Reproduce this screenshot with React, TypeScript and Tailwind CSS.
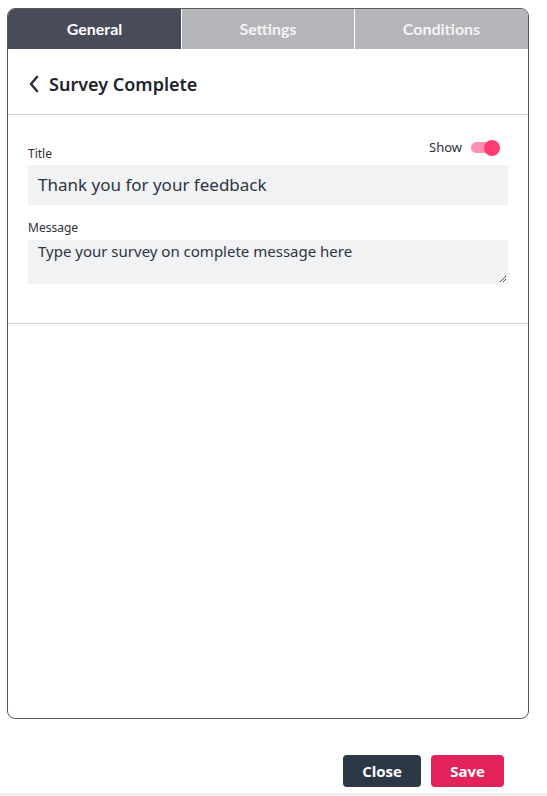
export default function App() {
  return (
    <div className="w-[547px] h-[796px] bg-white flex flex-col" style={{ fontFamily: "'Noto Sans', sans-serif" }}>
      {/* panel */}
      <div className="mt-2 ml-[7px] w-[522px] h-[711px] border border-[#5a5a5a] rounded-lg overflow-hidden flex flex-col">
        {/* tabs */}
        <div className="flex h-10 shrink-0" style={{ fontFamily: "Lato, sans-serif" }}>
          <div className="w-[173px] flex items-center justify-center bg-[#474b5a] text-white text-[16px] font-bold">General</div>
          <div className="w-[173px] flex items-center justify-center bg-[#b4b5b9] border-l border-white text-[#f4f4f5] text-[16px] font-bold">Settings</div>
          <div className="flex-1 flex items-center justify-center bg-[#b4b5b9] border-l border-white text-[#f4f4f5] text-[16px] font-bold">Conditions</div>
        </div>

        {/* header */}
        <div className="h-[66px] shrink-0 flex items-center pl-5 pt-[5px] border-b border-[#cfcfcf]">
          <svg width="12" height="18" viewBox="0 0 12 18" fill="none">
            <path d="M9 2L3 9l6 7" stroke="#2d3340" strokeWidth="2.6" strokeLinecap="round" strokeLinejoin="round" />
          </svg>
          <span className="ml-[9px] text-[18px] font-semibold text-[#1f232b]">Survey Complete</span>
        </div>

        {/* form */}
        <div className="px-5 pt-[25px] pb-[39px] border-b border-[#cfcfcf]">
          <div className="flex items-end justify-between">
            <span className="text-[12px] text-[#2c2f36]">Title</span>
            <div className="flex items-center gap-[9px] mr-[8px] mb-[3px] -translate-y-[2px]">
              <span className="text-[13px] text-[#2c2f36]">Show</span>
              <div className="relative w-[29px] h-4 flex items-center">
                <div className="w-[26px] h-[11px] rounded-full bg-[#ff8fb0]" />
                <div className="absolute right-0 top-0 w-4 h-4 rounded-full bg-[#ff3d73]" />
              </div>
            </div>
          </div>
          <div className="mt-[2px] h-10 bg-[#f0f2f4] flex items-center px-[10px] text-[17px] text-[#2d3542]">
            Thank you for your feedback
          </div>
          <div className="mt-[14px] text-[12px] text-[#2c2f36]">Message</div>
          <div className="relative mt-[3px] h-[44px] bg-[#f0f2f4] px-[10px] text-[15px] text-[#2d3542]">
            Type your survey on complete message here
            <svg className="absolute right-[1px] bottom-[1px]" width="8" height="8" viewBox="0 0 8 8">
              <path d="M7 1L1 7M7 4L4 7" stroke="#555" strokeWidth="1" />
            </svg>
          </div>
        </div>
      </div>

      {/* footer */}
      <div className="flex justify-end gap-[10px] pr-[43px] mt-9" style={{ fontFamily: "'Open Sans', sans-serif" }}>
        <button className="w-[78px] h-8 rounded bg-[#2d3846] text-white text-[15px] font-bold">Close</button>
        <button className="w-[73px] h-8 rounded bg-[#e3215a] text-white text-[15px] font-bold">Save</button>
      </div>
      <div className="mt-auto h-[3px] bg-[#f0f0f0]" />
    </div>
  );
}
